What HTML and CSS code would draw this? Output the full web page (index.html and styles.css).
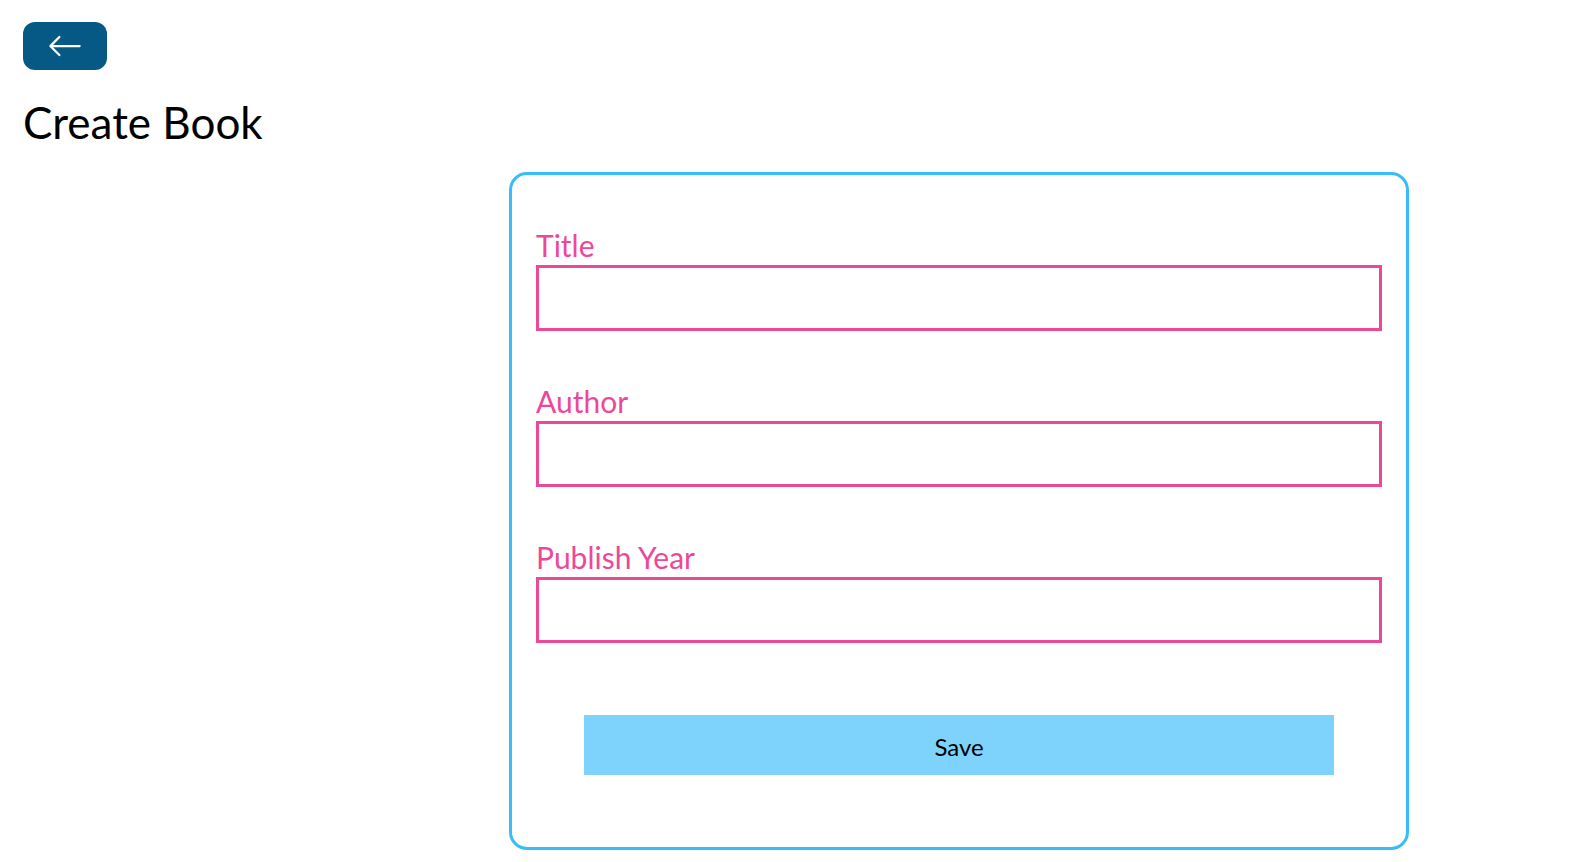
FILE: index.html
```html
<!DOCTYPE html>
<html lang="en">
<head>
<meta charset="utf-8">
<title>Create Book</title>
<link rel="stylesheet" href="styles.css">
</head>
<body>
<div class="page">
  <div class="back-row">
    <a class="back-btn" href="#" aria-label="Back">
      <svg class="back-icon" viewBox="0 0 16 16" width="36" height="36" fill="currentColor" aria-hidden="true">
        <path fill-rule="evenodd" d="M15 8a.5.5 0 0 0-.5-.5H2.707l3.147-3.146a.5.5 0 1 0-.708-.708l-4 4a.5.5 0 0 0 0 .708l4 4a.5.5 0 0 0 .708-.708L2.707 8.5H14.5A.5.5 0 0 0 15 8z"/>
      </svg>
    </a>
  </div>
  <h1 class="page-title">Create Book</h1>
  <form class="card">
    <div class="field">
      <label class="field-label" for="title">Title</label>
      <input class="field-input" id="title" type="text">
    </div>
    <div class="field">
      <label class="field-label" for="author">Author</label>
      <input class="field-input" id="author" type="text">
    </div>
    <div class="field">
      <label class="field-label" for="year">Publish Year</label>
      <input class="field-input" id="year" type="number">
    </div>
    <button class="save-btn" type="button">Save</button>
  </form>
</div>
</body>
</html>
```
FILE: styles.css
```css
* {
  box-sizing: border-box;
}

html, body {
  margin: 0;
  padding: 0;
  background: #ffffff;
}

body {
  font-family: "Lato", "Open Sans", sans-serif;
  color: #000000;
}

.page {
  padding: 22px 23px;
}

.back-row {
  display: flex;
}

.back-btn {
  display: flex;
  align-items: center;
  justify-content: center;
  width: 84px;
  height: 48px;
  padding: 6px 24px;
  background: #075985;
  color: #ffffff;
  border-radius: 12px;
  text-decoration: none;
}

.back-icon {
  display: block;
  width: 36px;
  height: 36px;
}

.page-title {
  margin: 24px 0;
  padding-top: 3px;
  font-size: 44px;
  line-height: 51px;
  font-weight: 400;
}

.card {
  display: flex;
  flex-direction: column;
  width: 900px;
  margin-left: 486px;
  padding: 24px;
  border: 3px solid #38bdf8;
  border-radius: 18px;
}

.field {
  display: flex;
  flex-direction: column;
  margin: 24px 0;
}

.field-label {
  padding-top: 2px;
  font-size: 30px;
  line-height: 40px;
  color: #ec4899;
}

.field-input {
  width: 100%;
  height: 66px;
  padding: 12px 24px;
  border: 3px solid #ec4899;
  border-radius: 0;
  font: inherit;
  font-size: 24px;
  outline: none;
  background: #ffffff;
  -moz-appearance: textfield;
}

.field-input::-webkit-outer-spin-button,
.field-input::-webkit-inner-spin-button {
  -webkit-appearance: none;
  margin: 0;
}

.save-btn {
  margin: 48px;
  height: 60px;
  padding: 14px 12px 10px;
  border: 0;
  background: #7dd3fc;
  color: #000000;
  font-family: inherit;
  font-size: 24px;
  line-height: 36px;
  cursor: pointer;
}
```
